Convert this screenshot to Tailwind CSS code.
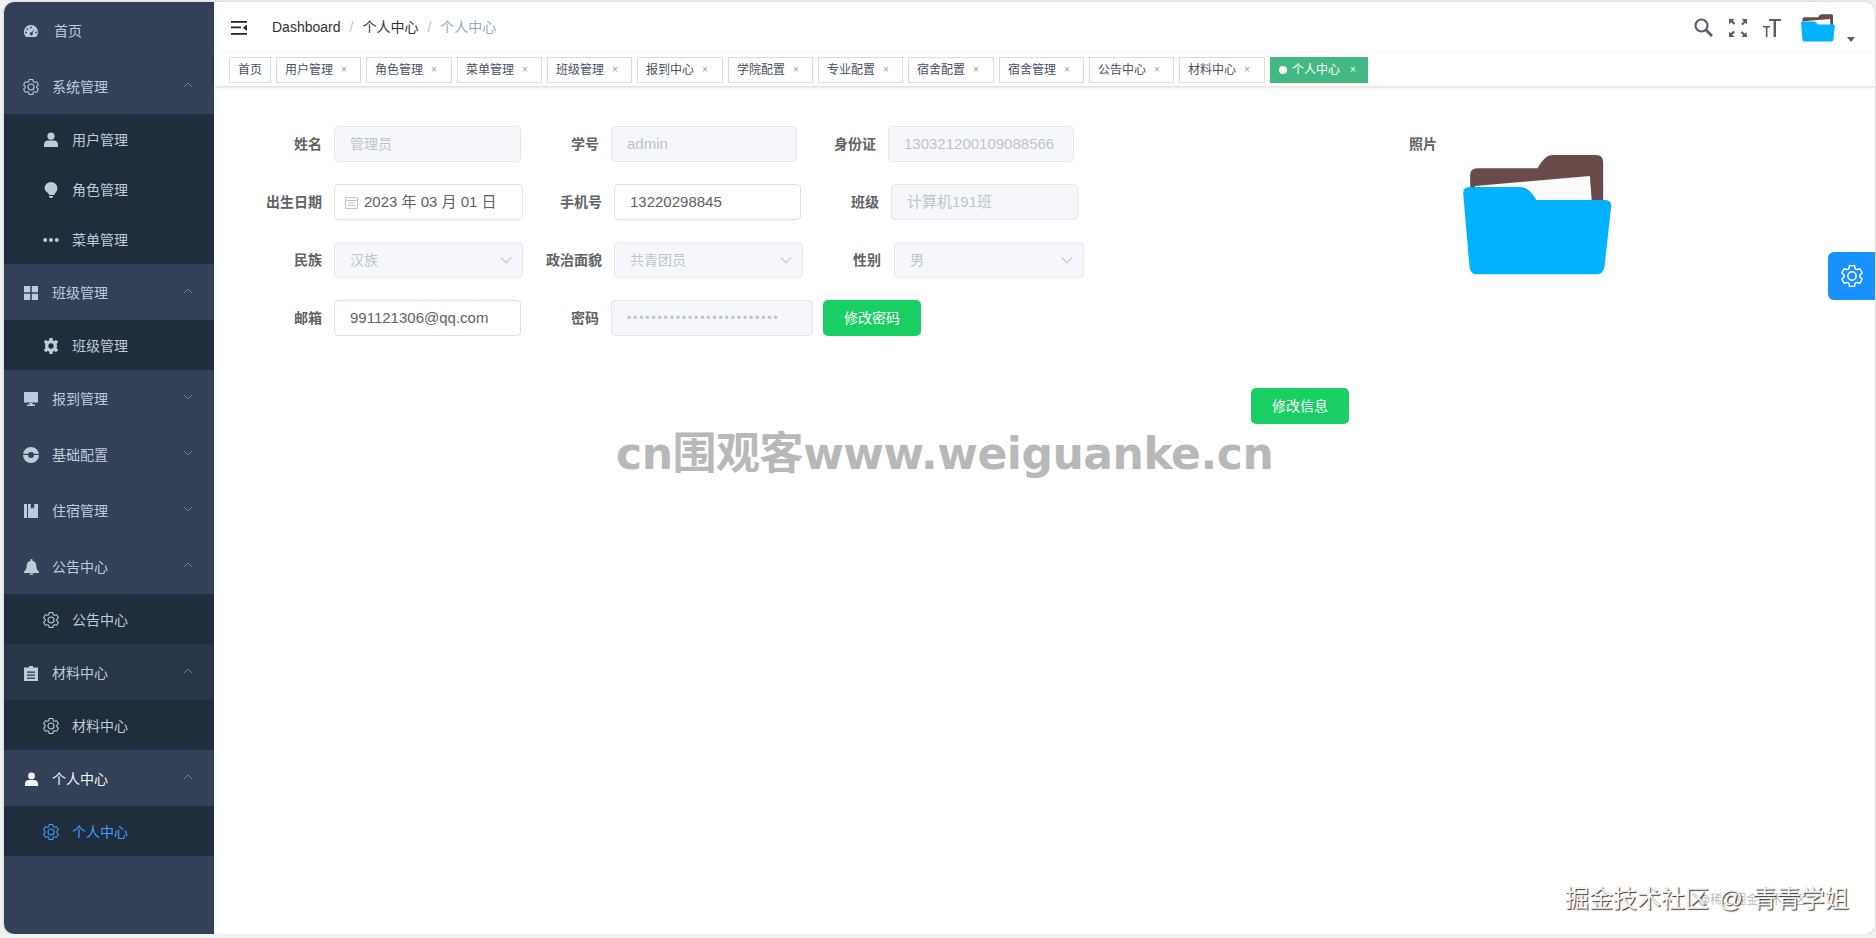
<!DOCTYPE html>
<html lang="en">
<head>
    <meta charset="UTF-8">
    <title>个人中心</title>
    <script src="https://cdn.jsdelivr.net/npm/@tailwindcss/browser@4"></script>
</head>
<body class="bg-[#f1f1f1] font-['Liberation_Sans','Noto_Sans_CJK_SC',sans-serif]">

    <!-- Icons used more than once -->
    <svg class="hidden">
        <symbol id="gear" viewBox="2.500 2.500 19 19">
            <path fill="none" stroke="currentColor" stroke-width="1.3" d="M9.594 3.94c.09-.542.56-.94 1.11-.94h2.593c.55 0 1.02.398 1.11.94l.213 1.281c.063.374.313.686.645.87.074.04.147.083.22.127.325.196.72.257 1.075.124l1.217-.456a1.125 1.125 0 011.37.49l1.296 2.247a1.125 1.125 0 01-.26 1.431l-1.003.827c-.293.24-.438.613-.431.992a6.759 6.759 0 010 .255c-.007.378.138.75.43.99l1.005.828c.424.35.534.954.26 1.43l-1.298 2.247a1.125 1.125 0 01-1.369.491l-1.217-.456c-.355-.133-.75-.072-1.076.124a6.57 6.57 0 01-.22.128c-.331.183-.581.495-.644.869l-.213 1.28c-.09.543-.56.941-1.11.941h-2.594c-.55 0-1.02-.398-1.11-.94l-.213-1.281c-.062-.374-.312-.686-.644-.87a6.52 6.52 0 01-.22-.127c-.325-.196-.72-.257-1.076-.124l-1.217.456a1.125 1.125 0 01-1.369-.49l-1.297-2.247a1.125 1.125 0 01.26-1.431l1.004-.827c.292-.24.437-.613.43-.992a6.932 6.932 0 010-.255c.007-.378-.138-.75-.43-.99l-1.004-.828a1.125 1.125 0 01-.26-1.43l1.297-2.247a1.125 1.125 0 011.37-.491l1.216.456c.356.133.751.072 1.076-.124.072-.044.146-.087.22-.128.332-.183.582-.495.644-.869l.214-1.281z"/>
            <circle cx="12" cy="12" r="3.600" fill="none" stroke="currentColor" stroke-width="1.3"/>
        </symbol>
        <symbol id="chev-up" viewBox="0 0 10 6"><path d="M1 5l4-4 4 4" fill="none" stroke="currentColor" stroke-width="0.8"/></symbol>
        <symbol id="chev-down" viewBox="0 0 10 6"><path d="M1 1l4 4 4-4" fill="none" stroke="currentColor" stroke-width="0.8"/></symbol>
        <symbol id="user" viewBox="0 0 16 16"><circle cx="8" cy="4.200" r="3.600" fill="currentColor"/><path d="M1 15v-2.200C1 10 3 8.600 5 8.600h6c2 0 4 1.400 4 4.200V15z" fill="currentColor"/></symbol>
        <symbol id="folder" viewBox="192 90 446 360">
            <path d="M213 150Q213 130 235 130L415 130Q435 90 460 90L590 90Q612 90 612 112L612 235L213 235z" fill="#6b4a4a"/>
            <path d="M228 183L572 153L578 230L228 230z" fill="#fbfbfb"/>
            <path d="M192 205Q192 186 212 186L360 186Q385 186 400 208L412 225L615 225Q638 225 636 245L616 425Q612 448 590 448L235 448Q213 448 211 425z" fill="#00b2ff"/>
        </symbol>
    </svg>

    <div class="relative mt-[2px] ml-[4px] w-[1871px] h-[932px] bg-white rounded-[10px] shadow-[0_0_3px_rgba(0,0,0,0.2)] overflow-hidden flex">

        <!-- Sidebar -->
        <aside class="w-[210px] h-full shrink-0 bg-[#324158] text-[14px] text-[#bfcbd9]">
            <a class="flex items-center h-[56px] pt-[2px] pl-[20px]">
                <svg class="w-[14px] h-[12px] mr-[16px]" viewBox="0 0 14 12"><path fill="currentColor" fill-rule="evenodd" d="M7 0a7 7 0 0 1 7 7c0 1.800-.6 3.400-1.700 4.600-.2.2-.4.4-.7.4H2.400c-.3 0-.5-.2-.7-.4A7 7 0 0 1 7 0zM7 1.600a.9.9 0 1 0 0 1.800.9.9 0 0 0 0-1.800zM3.400 3.200a.9.9 0 1 0 0 1.800.9.9 0 0 0 0-1.800zM2 6.600a.9.9 0 1 0 0 1.800.9.9 0 0 0 0-1.800zM12 6.600a.9.9 0 1 0 0 1.800.9.9 0 0 0 0-1.800zM10.600 3.200L7.600 7.400a1.500 1.500 0 1 0 1 .7z"/></svg>
                <span>首页</span>
            </a>

            <a class="flex items-center h-[56px] pt-[2px] pl-[19px]">
                <svg class="w-[16px] h-[16px] mr-[13px]"><use href="#gear"/></svg>
                <span>系统管理</span>
                <svg class="w-[10px] h-[6px] ml-auto mr-[21px] -mt-[5px] text-[#7f8da0]"><use href="#chev-up"/></svg>
            </a>
            <div class="bg-[#1f2d3d]">
                <a class="flex items-center h-[50px] pt-[2px] pl-[39px]">
                    <svg class="w-[16px] h-[16px] mr-[13px]"><use href="#user"/></svg>
                    <span>用户管理</span>
                </a>
                <a class="flex items-center h-[50px] pt-[2px] pl-[39px]">
                    <svg class="w-[16px] h-[16px] mr-[13px]" viewBox="0 0 16 16"><path fill="currentColor" d="M8 0a6.400 6.400 0 0 1 6.400 6.400c0 2.800-2.400 4.400-3.200 6.600H6.200C6 10.600 1.600 9.200 1.600 6.400A6.400 6.400 0 0 1 8 0zM6 14h4v.8L9 16H7l-1-1.200z"/></svg>
                    <span>角色管理</span>
                </a>
                <a class="flex items-center h-[50px] pt-[2px] pl-[39px]">
                    <svg class="w-[16px] h-[16px] mr-[13px]" viewBox="0 0 16 16"><circle cx="2.200" cy="8" r="2" fill="currentColor"/><circle cx="8" cy="8" r="2" fill="currentColor"/><circle cx="13.800" cy="8" r="2" fill="currentColor"/></svg>
                    <span>菜单管理</span>
                </a>
            </div>

            <a class="flex items-center h-[56px] pt-[2px] pl-[20px]">
                <svg class="w-[14px] h-[14px] mr-[14px]" viewBox="0 0 14 14"><path fill="currentColor" d="M0 0h6.200v6.200H0zM7.800 0H14v6.200H7.800zM0 7.800h6.200V14H0zM7.800 7.800H14V14H7.800z"/></svg>
                <span>班级管理</span>
                <svg class="w-[10px] h-[6px] ml-auto mr-[21px] -mt-[5px] text-[#7f8da0]"><use href="#chev-up"/></svg>
            </a>
            <div class="bg-[#1f2d3d]">
                <a class="flex items-center h-[50px] pt-[2px] pl-[39px]">
                    <svg class="w-[16px] h-[16px] mr-[13px]" viewBox="0 0 24 24"><circle cx="12" cy="12" r="6.500" fill="none" stroke="currentColor" stroke-width="5"/><path fill="currentColor" d="M9.500 0h5v5h-5zM9.500 19h5v5h-5zM1 5.500L5 2.500l3 4-4 3zM19 2.500l4 3-3 4-4-3zM1 18.500L4 14.500l4 3-3 4zM20 14.500l3 4-4 3-3-4z"/></svg>
                    <span>班级管理</span>
                </a>
            </div>

            <a class="flex items-center h-[56px] pt-[2px] pl-[20px]">
                <svg class="w-[14px] h-[14px] mr-[14px]" viewBox="0 0 14 14"><path fill="currentColor" d="M0 0h14v10.500H0zM5.500 11h3v1.600h2.500V14H3v-1.400h2.500z"/></svg>
                <span>报到管理</span>
                <svg class="w-[10px] h-[6px] ml-auto mr-[21px] -mt-[5px] text-[#7f8da0]"><use href="#chev-down"/></svg>
            </a>
            <a class="flex items-center h-[56px] pt-[2px] pl-[19px]">
                <svg class="w-[16px] h-[16px] mr-[13px]" viewBox="0 0 16 16"><path fill="currentColor" fill-rule="evenodd" d="M8 0a8 8 0 1 1 0 16A8 8 0 0 1 8 0zM8 5a3 3 0 1 0 0 6 3 3 0 0 0 0-6z"/><path fill="#324158" d="M0 6.800h16v1.200H0z"/></svg>
                <span>基础配置</span>
                <svg class="w-[10px] h-[6px] ml-auto mr-[21px] -mt-[5px] text-[#7f8da0]"><use href="#chev-down"/></svg>
            </a>
            <a class="flex items-center h-[56px] pt-[2px] pl-[20px]">
                <svg class="w-[14px] h-[14px] mr-[14px]" viewBox="0 0 14 14"><path fill="currentColor" d="M0 0h3v14H0zM4 0h2.800v5L8.500 3.600 10.200 5V0H14v14H4z"/></svg>
                <span>住宿管理</span>
                <svg class="w-[10px] h-[6px] ml-auto mr-[21px] -mt-[5px] text-[#7f8da0]"><use href="#chev-down"/></svg>
            </a>
            <a class="flex items-center h-[56px] pt-[2px] pl-[20px]">
                <svg class="w-[15px] h-[16px] mr-[13px]" viewBox="0 0 15 16"><path fill="currentColor" d="M7.500 0c.6 0 1 .4 1 1v.7c2.500.5 3.800 2.500 3.800 5 0 3 1 4 2.700 6V14H0v-1.300c1.700-2 2.700-3 2.700-6 0-2.500 1.300-4.500 3.800-5V1c0-.6.4-1 1-1zM5.500 14.500h4a2 1.500 0 0 1-4 0z"/></svg>
                <span>公告中心</span>
                <svg class="w-[10px] h-[6px] ml-auto mr-[21px] -mt-[5px] text-[#7f8da0]"><use href="#chev-up"/></svg>
            </a>
            <div class="bg-[#1f2d3d]">
                <a class="flex items-center h-[50px] pt-[2px] pl-[39px]">
                    <svg class="w-[16px] h-[16px] mr-[13px]"><use href="#gear"/></svg>
                    <span>公告中心</span>
                </a>
            </div>

            <a class="flex items-center h-[56px] pt-[2px] pl-[20px] bg-[#283647]">
                <svg class="w-[14px] h-[15px] mr-[14px]" viewBox="0 0 14 15"><path fill="currentColor" fill-rule="evenodd" d="M5 0h4v1.500h5V15H0V1.500h5zM3 5.500v1.300h8V5.500zM3 8.500v1.300h8V8.500zM3 11.500v1.300h8v-1.300z"/></svg>
                <span>材料中心</span>
                <svg class="w-[10px] h-[6px] ml-auto mr-[21px] -mt-[5px] text-[#7f8da0]"><use href="#chev-up"/></svg>
            </a>
            <div class="bg-[#1f2d3d]">
                <a class="flex items-center h-[50px] pt-[2px] pl-[39px]">
                    <svg class="w-[16px] h-[16px] mr-[13px]"><use href="#gear"/></svg>
                    <span>材料中心</span>
                </a>
            </div>

            <a class="flex items-center h-[56px] pt-[2px] pl-[20px] text-[#f4f4f5]">
                <svg class="w-[15px] h-[15px] mr-[13px]"><use href="#user"/></svg>
                <span>个人中心</span>
                <svg class="w-[10px] h-[6px] ml-auto mr-[21px] -mt-[5px] text-[#7f8da0]"><use href="#chev-up"/></svg>
            </a>
            <div class="bg-[#1f2d3d] text-[#409eff]">
                <a class="flex items-center h-[50px] pt-[2px] pl-[39px]">
                    <svg class="w-[16px] h-[16px] mr-[13px]"><use href="#gear"/></svg>
                    <span>个人中心</span>
                </a>
            </div>
        </aside>

        <!-- Main -->
        <div class="flex-1 min-w-0">

            <!-- Navbar -->
            <header class="h-[51px] flex items-center pl-[17px] pr-[20px]">
                <svg class="w-[16px] h-[14px] mr-[25px]" viewBox="0 0 16 14"><path fill="#222" d="M0 0h16v1.800H0zM0 5.500h10v1.800H0zM0 12h16v1.800H0zM16 3.700v6.200L12 6.800z"/></svg>
                <nav class="flex items-center text-[14px]">
                    <span class="text-[#303133]">Dashboard</span>
                    <span class="mx-[9px] text-[#c0c4cc]">/</span>
                    <span class="text-[#303133]">个人中心</span>
                    <span class="mx-[9px] text-[#c0c4cc]">/</span>
                    <span class="text-[#97a8be]">个人中心</span>
                </nav>
                <div class="ml-auto flex items-center text-[#5a5e66]">
                    <svg class="w-[19px] h-[19px] mr-[16px]" viewBox="0 0 19 19"><circle cx="7.500" cy="7.500" r="6" fill="none" stroke="currentColor" stroke-width="2.200"/><path d="M12 12l6 6" stroke="currentColor" stroke-width="2.800"/></svg>
                    <svg class="w-[18px] h-[18px] mr-[16px]" viewBox="0 0 18 18"><path fill="currentColor" d="M0 0h5.500L3.800 1.700l2.500 2.500-1.600 1.600-2.500-2.500L0 5.500zM18 0v5.500l-1.700-1.700-2.500 2.500-1.600-1.600 2.500-2.500L12.500 0zM0 18v-5.500l1.700 1.700 2.500-2.500 1.600 1.600-2.500 2.500L5.500 18zM18 18h-5.500l1.700-1.700-2.500-2.500 1.600-1.600 2.500 2.500 1.700-1.700z"/></svg>
                    <svg class="w-[18px] h-[18px] mr-[20px]" viewBox="0 0 18 18"><path fill="currentColor" d="M6 0h12v2h-5v16h-2.500V2H6zM0 7h7v1.600H4.500V18H2.800V8.600H0z"/></svg>
                    <svg class="w-[34px] h-[28px] mr-[12px]"><use href="#folder"/></svg>
                    <span class="mt-[23px] w-0 h-0 border-x-[4px] border-x-transparent border-t-[5px] border-t-[#5a5e66]"></span>
                </div>
            </header>

            <!-- Tags -->
            <div class="h-[33px] flex items-center gap-[5px] pl-[15px] text-[12px] text-[#495060] bg-white shadow-[0_1px_3px_rgba(0,0,0,0.18)]">
                <span class="h-[26px] w-[42px] flex items-center justify-center border border-[#d8dce5]">首页</span>
                <span class="h-[26px] w-[85px] flex items-center pl-[8px] border border-[#d8dce5]">用户管理<i class="ml-[8px] not-italic text-[10px] text-[#9a9a9a]">×</i></span>
                <span class="h-[26px] w-[86px] flex items-center pl-[8px] border border-[#d8dce5]">角色管理<i class="ml-[8px] not-italic text-[10px] text-[#9a9a9a]">×</i></span>
                <span class="h-[26px] w-[85px] flex items-center pl-[8px] border border-[#d8dce5]">菜单管理<i class="ml-[8px] not-italic text-[10px] text-[#9a9a9a]">×</i></span>
                <span class="h-[26px] w-[85px] flex items-center pl-[8px] border border-[#d8dce5]">班级管理<i class="ml-[8px] not-italic text-[10px] text-[#9a9a9a]">×</i></span>
                <span class="h-[26px] w-[86px] flex items-center pl-[8px] border border-[#d8dce5]">报到中心<i class="ml-[8px] not-italic text-[10px] text-[#9a9a9a]">×</i></span>
                <span class="h-[26px] w-[85px] flex items-center pl-[8px] border border-[#d8dce5]">学院配置<i class="ml-[8px] not-italic text-[10px] text-[#9a9a9a]">×</i></span>
                <span class="h-[26px] w-[85px] flex items-center pl-[8px] border border-[#d8dce5]">专业配置<i class="ml-[8px] not-italic text-[10px] text-[#9a9a9a]">×</i></span>
                <span class="h-[26px] w-[86px] flex items-center pl-[8px] border border-[#d8dce5]">宿舍配置<i class="ml-[8px] not-italic text-[10px] text-[#9a9a9a]">×</i></span>
                <span class="h-[26px] w-[85px] flex items-center pl-[8px] border border-[#d8dce5]">宿舍管理<i class="ml-[8px] not-italic text-[10px] text-[#9a9a9a]">×</i></span>
                <span class="h-[26px] w-[85px] flex items-center pl-[8px] border border-[#d8dce5]">公告中心<i class="ml-[8px] not-italic text-[10px] text-[#9a9a9a]">×</i></span>
                <span class="h-[26px] w-[86px] flex items-center pl-[8px] border border-[#d8dce5]">材料中心<i class="ml-[8px] not-italic text-[10px] text-[#9a9a9a]">×</i></span>
                <span class="h-[26px] w-[98px] flex items-center pl-[9px] bg-[#42b983] text-white"><i class="w-[8px] h-[8px] mr-[5px] rounded-full bg-white"></i>个人中心<i class="ml-[10px] not-italic text-[10px]">×</i></span>
            </div>

            <!-- Form -->
            <div class="relative pt-[40px] text-[14px]">
                <div class="flex items-center h-[36px] mb-[22px]">
                    <label class="w-[108px] text-right font-bold text-[#606266]">姓名</label>
                    <div class="ml-[12px] w-[187px] h-[36px] flex items-center px-[15px] bg-[#f5f7fa] border border-[#e4e7ed] rounded text-[#c0c4cc]">管理员</div>
                    <label class="w-[78px] text-right font-bold text-[#606266]">学号</label>
                    <div class="ml-[12px] w-[186px] h-[36px] flex items-center px-[15px] bg-[#f5f7fa] border border-[#e4e7ed] rounded text-[15px] text-[#c0c4cc]">admin</div>
                    <label class="w-[79px] text-right font-bold text-[#606266]">身份证</label>
                    <div class="ml-[12px] w-[186px] h-[36px] flex items-center px-[15px] bg-[#f5f7fa] border border-[#e4e7ed] rounded text-[15px] text-[#c0c4cc]">130321200109088566</div>
                </div>
                <div class="flex items-center h-[36px] mb-[22px]">
                    <label class="w-[108px] text-right font-bold text-[#606266]">出生日期</label>
                    <div class="ml-[12px] w-[189px] h-[36px] flex items-center pl-[10px] bg-white border border-[#dcdfe6] rounded text-[15px] text-[#606266]">
                        <svg class="w-[13px] h-[13px] mr-[6px]" viewBox="0 0 13 13"><path fill="none" stroke="#c0c4cc" d="M.5 1.500h12v11H.5zM.5 4.500h12M3 7h7M3 9.500h7"/></svg>
                        2023 年 03 月 01 日
                    </div>
                    <label class="w-[79px] text-right font-bold text-[#606266]">手机号</label>
                    <div class="ml-[12px] w-[187px] h-[36px] flex items-center px-[15px] bg-white border border-[#dcdfe6] rounded text-[15px] text-[#606266]">13220298845</div>
                    <label class="w-[78px] text-right font-bold text-[#606266]">班级</label>
                    <div class="ml-[12px] w-[187px] h-[36px] flex items-center px-[15px] bg-[#f5f7fa] border border-[#e4e7ed] rounded text-[15px] text-[#c0c4cc]">计算机191班</div>
                </div>
                <div class="flex items-center h-[36px] mb-[22px]">
                    <label class="w-[108px] text-right font-bold text-[#606266]">民族</label>
                    <div class="ml-[12px] w-[189px] h-[36px] flex items-center justify-between pl-[15px] pr-[9px] bg-[#f5f7fa] border border-[#e4e7ed] rounded text-[#c0c4cc]">汉族<svg class="w-[14px] h-[8px]"><use href="#chev-down"/></svg></div>
                    <label class="w-[79px] text-right font-bold text-[#606266]">政治面貌</label>
                    <div class="ml-[12px] w-[189px] h-[36px] flex items-center justify-between pl-[15px] pr-[9px] bg-[#f5f7fa] border border-[#e4e7ed] rounded text-[#c0c4cc]">共青团员<svg class="w-[14px] h-[8px]"><use href="#chev-down"/></svg></div>
                    <label class="w-[78px] text-right font-bold text-[#606266]">性别</label>
                    <div class="ml-[13px] w-[190px] h-[36px] flex items-center justify-between pl-[15px] pr-[9px] bg-[#f5f7fa] border border-[#e4e7ed] rounded text-[#c0c4cc]">男<svg class="w-[14px] h-[8px]"><use href="#chev-down"/></svg></div>
                </div>
                <div class="flex items-center h-[36px] mb-[22px]">
                    <label class="w-[108px] text-right font-bold text-[#606266]">邮箱</label>
                    <div class="ml-[12px] w-[187px] h-[36px] flex items-center px-[15px] bg-white border border-[#dcdfe6] rounded text-[15px] text-[#606266]">991121306@qq.com</div>
                    <label class="w-[78px] text-right font-bold text-[#606266]">密码</label>
                    <div class="ml-[12px] w-[202px] h-[36px] flex items-center px-[15px] bg-[#f5f7fa] border border-[#e4e7ed] rounded text-[#c0c4cc] text-[12px] tracking-[1.900px]">•••••••••••••••••••••••••</div>
                    <button class="ml-[10px] w-[98px] h-[36px] bg-[#19ce63] text-white text-[14px] rounded-[5px]">修改密码</button>
                </div>
                <div class="mt-[52px] ml-[1037px]">
                    <button class="w-[98px] h-[36px] bg-[#19ce63] text-white text-[14px] rounded-[5px]">修改信息</button>
                </div>

                <!-- Photo -->
                <div class="absolute left-[1195px] top-[48px] font-bold text-[#606266]">照片</div>
                <svg class="absolute left-[1249px] top-[69px] w-[149px] h-[120px]"><use href="#folder"/></svg>
            </div>
        </div>

        <!-- Settings drawer handle -->
        <div class="absolute right-0 top-[250px] w-[47px] h-[48px] bg-[#1890ff] rounded-l-[6px] flex items-center justify-center text-white">
            <svg class="w-[22px] h-[22px]"><use href="#gear"/></svg>
        </div>
    </div>

    <!-- Watermarks on the screenshot -->
    <div class="absolute left-[616px] top-[426px] text-[44px] leading-[56px] tracking-[-0.45px] font-bold text-[#b8b8b8] font-['DejaVu_Sans','Noto_Sans_CJK_SC',sans-serif] whitespace-nowrap">cn围观客www.weiguanke.cn</div>
    <div class="absolute left-[1698px] top-[892px] text-[12px] leading-[16px] text-[#bbbbbb] whitespace-nowrap">@稀土掘金技术社区</div>
    <div class="absolute left-[1565px] top-[882px] text-[24px] leading-[34px] text-[#f4f4f4] [text-shadow:1px_1px_1px_#333] [word-spacing:3px] whitespace-nowrap">掘金技术社区 @ 青青学姐</div>

</body>
</html>
